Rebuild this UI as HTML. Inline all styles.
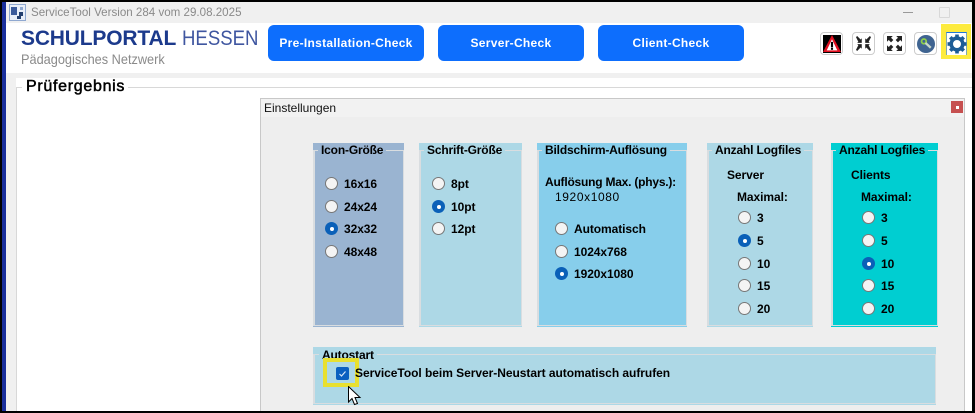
<!DOCTYPE html>
<html><head><meta charset="utf-8">
<style>
html,body{margin:0;padding:0;width:975px;height:413px;overflow:hidden;background:#fff}
body{position:relative;font-family:"Liberation Sans",sans-serif;color:#000}
div,span,svg{position:absolute}
.t{font-weight:bold;font-size:12px;line-height:14px;white-space:nowrap;color:#000;letter-spacing:-.07px}
.btn{top:25px;height:36px;background:#0d6efd;border-radius:6px;color:#fff;font-weight:bold;font-size:12px;line-height:36px;text-align:center;letter-spacing:.3px}
.p{top:143px;height:184px;box-sizing:border-box}
.b{left:0;right:0;top:7px;bottom:1px;border:1px solid #d9dde0;border-left-width:2px;box-sizing:border-box}
.lg{top:0;height:14px;font-weight:bold;font-size:12px;line-height:14px;padding:0 3px;white-space:nowrap;letter-spacing:-.17px}
.r{width:13px;height:13px;box-sizing:border-box;border-radius:50%;background:#f4f4f4;border:1.5px solid #777}
.c{background:#0a60b8;border:none}
.c:after{content:"";position:absolute;left:4.5px;top:4.5px;width:4px;height:4px;border-radius:50%;background:#fff}
.ib{top:32px;width:23px;height:23px;box-sizing:border-box;border:1px solid #ccc;border-radius:4px;background:#fff}
</style></head><body>
<!-- frame -->
<div style="left:0;top:23px;width:975px;height:55px;background:#fff"></div>
<div style="left:0;top:0;width:975px;height:23px;background:#f0f0f0"></div>
<div style="left:0;top:73px;width:975px;height:5px;background:#f0f0f0"></div>
<div style="left:6px;top:78px;width:10px;height:335px;background:#f0f0f0"></div>
<div style="left:16px;top:87px;width:1px;height:326px;background:#d8d8d8"></div>
<div style="left:16px;top:87px;width:960px;height:1px;background:#d8d8d8"></div>
<div style="left:22px;top:78px;width:106px;height:18px;background:#fff"></div>

<!-- title bar -->
<svg style="left:9px;top:4px" width="17" height="17" viewBox="0 0 17 17"><rect x=".5" y=".5" width="16" height="16" fill="#e8eef8" stroke="#8fa8d0"/><rect x="2" y="3" width="6" height="8" fill="#3a5a9a"/><rect x="10" y="8" width="4" height="4" fill="#24406f"/><rect x="8" y="12" width="4" height="3" fill="#24406f"/><rect x="11" y="3" width="3" height="3" fill="#8fa8d0"/></svg>
<div style="left:31px;top:5px;font-size:12px;line-height:15px;color:#8a8a8a;white-space:nowrap;transform:scaleX(.965);transform-origin:0 0">ServiceTool Version 284 vom 29.08.2025</div>
<div style="left:903px;top:12px;width:10px;height:1px;background:#999"></div>
<div style="left:939px;top:7px;width:9px;height:9px;border:1px solid #d8d8d8;border-radius:1px"></div>

<!-- logo -->
<div style="left:21px;top:26px;font-size:21px;line-height:25px;font-weight:bold;color:#1c3a8c;white-space:nowrap;letter-spacing:-.18px">SCHULPORTAL</div>
<div style="left:182px;top:26px;font-size:21px;line-height:25px;color:#3f56a0;white-space:nowrap;transform:scaleX(.885);transform-origin:0 0">HESSEN</div>
<div style="left:21px;top:51px;font-size:14px;line-height:17px;color:#8a8a8a;white-space:nowrap;transform:scaleX(.91);transform-origin:0 0">Pädagogisches Netzwerk</div>

<!-- buttons -->
<div class="btn" style="left:268px;width:156px">Pre-Installation-Check</div>
<div class="btn" style="left:438px;width:146px">Server-Check</div>
<div class="btn" style="left:598px;width:146px">Client-Check</div>

<!-- toolbar icons -->
<div class="ib" style="left:820px"><svg style="left:2px;top:2px" width="18" height="18" viewBox="0 0 17 17"><rect width="17" height="17" fill="#000"/><path d="M8.500 0L17 16H0Z" fill="#e01020"/><path d="M8.500 4L13.500 14.500H3.500Z" fill="#fff"/><rect x="7.500" y="6.500" width="2" height="5" fill="#000"/><rect x="7.500" y="12" width="2" height="2" fill="#000"/></svg></div>
<div class="ib" style="left:852px"><svg style="left:3px;top:3px" width="15" height="15" viewBox="0 0 13 13" fill="#222"><path d="M0 1L1 0 4 3 5 2V6H1L2 5Z"/><path d="M13 1L12 0 9 3 8 2V6H12L11 5Z"/><path d="M0 12L1 13 4 10 5 11V7H1L2 8Z"/><path d="M13 12L12 13 9 10 8 11V7H12L11 8Z"/></svg></div>
<div class="ib" style="left:883px"><svg style="left:3px;top:3px" width="15" height="15" viewBox="0 0 13 13" fill="#222"><path d="M0 0H5L3.500 1.500 5.500 3.500 3.500 5.500 1.500 3.500 0 5Z"/><path d="M13 0H8L9.500 1.500 7.500 3.500 9.500 5.500 11.500 3.500 13 5Z"/><path d="M0 13H5L3.500 11.500 5.500 9.500 3.500 7.500 1.500 9.500 0 8Z"/><path d="M13 13H8L9.500 11.500 7.500 9.500 9.500 7.500 11.500 9.500 13 8Z"/></svg></div>
<div class="ib" style="left:914px"><svg style="left:2px;top:2px" width="18" height="18" viewBox="0 0 17 17"><circle cx="8.500" cy="8.500" r="8.500" fill="#3f6491"/><circle cx="6.500" cy="6" r="2.200" fill="none" stroke="#8fd04a" stroke-width="1.700"/><path d="M8 7.500L13 12" stroke="#c8d8c8" stroke-width="2.200"/></svg></div>

<!-- gear with highlight -->
<div style="left:941px;top:24px;width:30px;height:35px;background:#fdeb3e"></div>
<div style="left:946px;top:32px;width:21px;height:23px;background:#fff;border-top:1px solid #1f78d8;border-left:1px solid #7fa8b0;border-right:1px solid #7fa8b0;box-sizing:border-box"></div>
<svg style="left:947px;top:33px" width="21" height="22" viewBox="0 0 21 22"><g transform="translate(10 11)" fill="#1d5c96"><circle r="5.800" fill="none" stroke="#1d5c96" stroke-width="3.600"/><rect x="-1.800" y="-9.500" width="3.600" height="3.600"/><rect x="-1.800" y="-9.500" width="3.600" height="3.600" transform="rotate(45)"/><rect x="-1.800" y="-9.500" width="3.600" height="3.600" transform="rotate(90)"/><rect x="-1.800" y="-9.500" width="3.600" height="3.600" transform="rotate(135)"/><rect x="-1.800" y="-9.500" width="3.600" height="3.600" transform="rotate(180)"/><rect x="-1.800" y="-9.500" width="3.600" height="3.600" transform="rotate(225)"/><rect x="-1.800" y="-9.500" width="3.600" height="3.600" transform="rotate(270)"/><rect x="-1.800" y="-9.500" width="3.600" height="3.600" transform="rotate(315)"/></g></svg>

<!-- Prüfergebnis -->
<div style="left:26px;top:78px;font-size:16px;line-height:18px;white-space:nowrap;letter-spacing:.7px;-webkit-text-stroke:.5px #000">Prüfergebnis</div>

<!-- dialog -->
<div style="left:260px;top:98px;width:705px;height:315px;box-sizing:border-box;border:1px solid #c8c8c8;border-bottom:none;background:#eeeeee"></div>
<div style="left:261px;top:99px;width:703px;height:18px;background:#f2f2f2"></div>
<div style="left:264px;top:101px;font-size:12px;line-height:14px;white-space:nowrap;color:#111">Einstellungen</div>
<div style="left:951px;top:101px;width:12px;height:12px;background:#c65050"></div>
<div style="left:956px;top:106px;width:3px;height:3px;background:#fff"></div>

<!-- Panel 1 -->
<div class="p" style="left:313px;width:91px;background:#9ab4d1"><div class="b"></div><div class="lg" style="left:5px;background:#9ab4d1">Icon-Größe</div></div>
<div class="r" style="left:325px;top:177px"></div><div class="t" style="left:344px;top:177px">16x16</div>
<div class="r" style="left:325px;top:200px"></div><div class="t" style="left:344px;top:200px">24x24</div>
<div class="r c" style="left:325px;top:222px"></div><div class="t" style="left:344px;top:222px">32x32</div>
<div class="r" style="left:325px;top:245px"></div><div class="t" style="left:344px;top:245px">48x48</div>

<!-- Panel 2 -->
<div class="p" style="left:419px;width:103px;background:#add8e6"><div class="b"></div><div class="lg" style="left:5px;background:#add8e6">Schrift-Größe</div></div>
<div class="r" style="left:432px;top:177px"></div><div class="t" style="left:451px;top:177px">8pt</div>
<div class="r c" style="left:432px;top:200px"></div><div class="t" style="left:451px;top:200px">10pt</div>
<div class="r" style="left:432px;top:222px"></div><div class="t" style="left:451px;top:222px">12pt</div>

<!-- Panel 3 -->
<div class="p" style="left:537px;width:150px;background:#87ceeb"><div class="b"></div><div class="lg" style="left:5px;background:#87ceeb">Bildschirm-Auflösung</div></div>
<div class="t" style="left:545px;top:175px;letter-spacing:-.22px">Auflösung Max. (phys.):</div>
<div style="left:555px;top:190px;font-size:12px;line-height:14px;letter-spacing:.6px;white-space:nowrap">1920x1080</div>
<div class="r" style="left:555px;top:222px"></div><div class="t" style="left:574px;top:222px">Automatisch</div>
<div class="r" style="left:555px;top:245px"></div><div class="t" style="left:574px;top:245px">1024x768</div>
<div class="r c" style="left:555px;top:267px"></div><div class="t" style="left:574px;top:267px">1920x1080</div>

<!-- Panel 4 -->
<div class="p" style="left:707px;width:106px;background:#add8e6"><div class="b"></div><div class="lg" style="left:5px;background:#add8e6">Anzahl Logfiles</div></div>
<div class="t" style="left:727px;top:168px">Server</div>
<div class="t" style="left:737px;top:190px">Maximal:</div>
<div class="r" style="left:738px;top:211px"></div><div class="t" style="left:757px;top:211px">3</div>
<div class="r c" style="left:738px;top:234px"></div><div class="t" style="left:757px;top:234px">5</div>
<div class="r" style="left:738px;top:257px"></div><div class="t" style="left:757px;top:257px">10</div>
<div class="r" style="left:738px;top:279px"></div><div class="t" style="left:757px;top:279px">15</div>
<div class="r" style="left:738px;top:302px"></div><div class="t" style="left:757px;top:302px">20</div>

<!-- Panel 5 -->
<div class="p" style="left:831px;width:107px;background:#00ced1"><div class="b"></div><div class="lg" style="left:5px;background:#00ced1">Anzahl Logfiles</div></div>
<div class="t" style="left:851px;top:168px">Clients</div>
<div class="t" style="left:861px;top:190px">Maximal:</div>
<div class="r" style="left:862px;top:211px"></div><div class="t" style="left:881px;top:211px">3</div>
<div class="r" style="left:862px;top:234px"></div><div class="t" style="left:881px;top:234px">5</div>
<div class="r c" style="left:862px;top:257px"></div><div class="t" style="left:881px;top:257px">10</div>
<div class="r" style="left:862px;top:279px"></div><div class="t" style="left:881px;top:279px">15</div>
<div class="r" style="left:862px;top:302px"></div><div class="t" style="left:881px;top:302px">20</div>

<!-- Autostart -->
<div style="left:313px;top:347px;width:623px;height:58px;background:#add8e6"><div class="b"></div><div class="lg" style="left:6px;top:1px;background:#add8e6">Autostart</div></div>
<div style="left:323px;top:358px;width:36px;height:29px;box-sizing:border-box;border:4px solid #e8e030"></div>
<div style="left:336px;top:367px;width:13px;height:13px;background:#0a60c0;border-radius:2px"></div>
<svg style="left:336px;top:367px" width="13" height="13" viewBox="0 0 13 13"><path d="M3.500 7L5.500 9 9.500 4.500" fill="none" stroke="#d8e8f8" stroke-width="1.200"/></svg>
<div class="t" style="left:355px;top:366px;letter-spacing:-.04px">ServiceTool beim Server-Neustart automatisch aufrufen</div>
<svg style="left:347px;top:386px" width="15" height="20" viewBox="0 0 15 20"><path d="M1.500 .5V16L5 12.500 7.500 18.500 10.500 17.500 8 11.500H13Z" fill="#fff" stroke="#000" stroke-width="1"/></svg>

<!-- outer border -->
<div style="left:0;top:0;width:975px;height:2px;background:#000"></div>
<div style="left:0;top:411px;width:975px;height:2px;background:#000"></div>
<div style="left:0;top:0;width:2px;height:413px;background:#000"></div>
<div style="left:2px;top:2px;width:4px;height:409px;background:#1a2f9c"></div>
<div style="left:972px;top:0;width:3px;height:413px;background:#000"></div>
</body></html>
